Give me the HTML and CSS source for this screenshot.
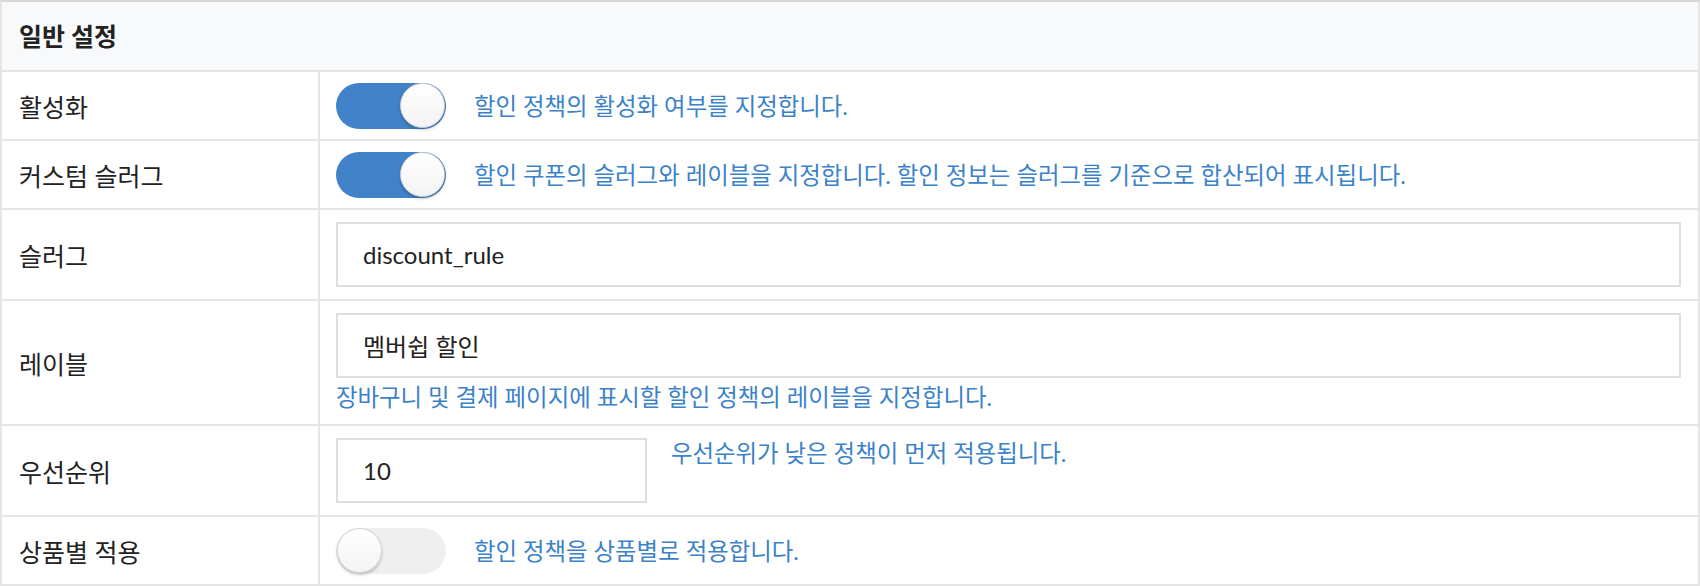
FILE: index.html
```html
<!DOCTYPE html>
<html lang="ko">
<head>
  <meta charset="UTF-8">
  <meta name="viewport" content="width=device-width, initial-scale=1.0">
  <title>할인 정책 설정</title>
  <link rel="stylesheet" href="styles.css">
</head>
<body>
  <div class="settings-table">
    <div class="table-header">일반 설정</div>

    <div class="row">
      <div class="label">활성화</div>
      <div class="value inline">
        <span class="toggle on"><span class="knob"></span></span>
        <span class="help">할인 정책의 활성화 여부를 지정합니다.</span>
      </div>
    </div>

    <div class="row">
      <div class="label">커스텀 슬러그</div>
      <div class="value inline">
        <span class="toggle on"><span class="knob"></span></span>
        <span class="help">할인 쿠폰의 슬러그와 레이블을 지정합니다. 할인 정보는 슬러그를 기준으로 합산되어 표시됩니다.</span>
      </div>
    </div>

    <div class="row">
      <div class="label">슬러그</div>
      <div class="value field">
        <input type="text" class="text-input" value="discount_rule">
      </div>
    </div>

    <div class="row">
      <div class="label">레이블</div>
      <div class="value field">
        <input type="text" class="text-input" value="멤버쉽 할인">
        <div class="help below">장바구니 및 결제 페이지에 표시할 할인 정책의 레이블을 지정합니다.</div>
      </div>
    </div>

    <div class="row">
      <div class="label">우선순위</div>
      <div class="value field top">
        <input type="text" class="text-input short" value="10">
        <span class="help">우선순위가 낮은 정책이 먼저 적용됩니다.</span>
      </div>
    </div>

    <div class="row">
      <div class="label">상품별 적용</div>
      <div class="value inline">
        <span class="toggle"><span class="knob"></span></span>
        <span class="help">할인 정책을 상품별로 적용합니다.</span>
      </div>
    </div>
  </div>
</body>
</html>
```

FILE: styles.css
```css
body, html {
  margin: 0;
  padding: 0;
  background-color: #ffffff;
  font-family: Lato, "Noto Sans CJK KR", sans-serif;
  color: #222;
}

.settings-table {
  border: 2px solid #e5e5e5;
  border-top-color: #d8d8d8;
}

.table-header {
  background-color: #f8f9fa;
  height: 70px;
  box-sizing: border-box;
  padding: 19px 17px;
  font-size: 25px;
  font-weight: bold;
  line-height: 30px;
  border-bottom: 2px solid #e5e5e5;
}

.row {
  display: grid;
  grid-template-columns: 318px 1fr;
  border-top: 2px solid #e5e5e5;
}

.table-header + .row {
  border-top: none;
}

.label {
  display: flex;
  align-items: center;
  padding: 0 17px;
  font-size: 25px;
  border-right: 2px solid #e5e5e5;
}

.value {
  padding: 10px 17px 10px 16px;
  font-size: 23.4px;
  line-height: 30px;
}

.inline {
  display: flex;
  align-items: center;
  gap: 28px;
  height: 67px;
  box-sizing: border-box;
}

.field {
  padding-top: 12px;
  padding-bottom: 12px;
}

.top {
  display: flex;
  align-items: flex-start;
  gap: 24px;
}

.help {
  color: #3b82c9;
}

.below {
  margin-top: 4px;
  line-height: 30px;
}

.text-input {
  display: block;
  box-sizing: border-box;
  width: 100%;
  height: 65px;
  margin: 0;
  padding: 0 25px;
  border: 2px solid #dfdfdf;
  border-radius: 0;
  font-family: Lato, "Noto Sans CJK KR", sans-serif;
  font-size: 24px;
  color: #222;
  background: #fff;
}

.text-input.short {
  width: 311px;
  flex-shrink: 0;
}

.toggle {
  display: flex;
  align-items: center;
  box-sizing: border-box;
  width: 110px;
  height: 46px;
  padding: 0 1px;
  border-radius: 23px;
  background-color: #efefef;
  flex-shrink: 0;
}

.toggle.on {
  background-color: #4282c8;
  justify-content: flex-end;
}

.knob {
  box-sizing: border-box;
  width: 45px;
  height: 45px;
  border-radius: 50%;
  border: 1px solid #d4d4d4;
  background: linear-gradient(#ffffff, #f3f3f3);
  box-shadow: 0 2px 3px rgba(0,0,0,0.22);
}
```
